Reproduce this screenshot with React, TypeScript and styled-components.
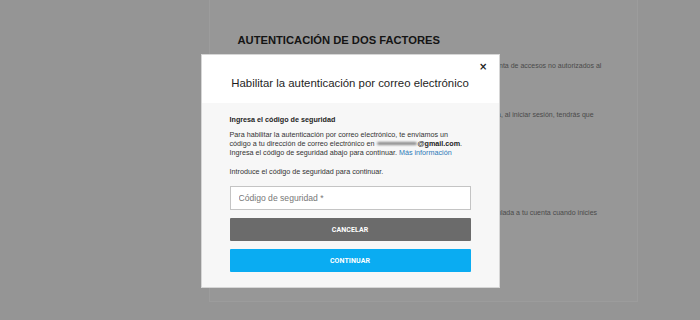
import React from 'react';
import styled, { createGlobalStyle } from 'styled-components';

const GlobalStyle = createGlobalStyle`
  html, body {
    margin: 0;
    padding: 0;
    background: #959595;
    font-family: 'Liberation Sans', Arial, sans-serif;
  }
`;

const Page = styled.div`
  width: 100%;
  height: 320px;
  display: flex;
  justify-content: center;
  padding-left: 146px;
  box-sizing: border-box;
  overflow: hidden;
`;
const Panel = styled.div`
  width: 429px;
  height: 302px;
  background: #979797;
  border-left: 1px solid #9c9c9c;
  border-right: 1px solid #9c9c9c;
  border-bottom: 1px solid #9c9c9c;
  padding: 34px 0 0 28px;
  box-sizing: border-box;
`;
const SectionTitle = styled.h2`
  margin: 0 0 16px;
  font-size: 11.2px;
  font-weight: 700;
  color: #141414;
`;
const BgText = styled.p`
  margin: 0;
  font-size: 7px;
  line-height: 8.5px;
  color: #4a4a4a;
  white-space: nowrap;
`;
const BgBlock = styled.div<{ gap: number }>`
  margin-bottom: ${(p) => p.gap}px;
`;

const Overlay = styled.div`
  position: fixed;
  inset: 0;
  display: flex;
  justify-content: center;
  align-items: flex-start;
  padding-top: 54px;
`;
const Modal = styled.div`
  position: relative;
  width: 299px;
  height: 234px;
  background: #f7f7f7;
  border: 1px solid #d6d6d6;
  box-sizing: border-box;
  display: flex;
  flex-direction: column;
`;
const Header = styled.div`
  height: 48px;
  background: #ffffff;
  display: flex;
  align-items: center;
  justify-content: center;
  padding-top: 8px;
  box-sizing: border-box;
`;
const Title = styled.h3`
  margin: 0;
  font-size: 11.4px;
  font-weight: 400;
  color: #1e1e1e;
`;
const Close = styled.button`
  position: absolute;
  top: 7px;
  right: 11px;
  border: 0;
  background: none;
  padding: 0;
  font-size: 10px;
  line-height: 10px;
  font-weight: 700;
  color: #222;
  font-family: 'DejaVu Sans', sans-serif;
`;
const Body = styled.div`
  padding: 12px 28px 0;
  display: flex;
  flex-direction: column;
`;
const Label = styled.div`
  font-size: 7.2px;
  font-weight: 700;
  color: #1e1e1e;
  margin-bottom: 6px;
`;
const Para = styled.p`
  margin: 0 0 10px;
  font-size: 7.2px;
  line-height: 9px;
  color: #333;
`;
const Email = styled.span`
  font-weight: 700;
  color: #222;
`;
const Blur = styled.span`
  display: inline-block;
  width: 40px;
  height: 3px;
  margin: 0 1px 1px 2px;
  background: #8a8a8a;
  border-radius: 2px;
  filter: blur(1px);
  vertical-align: middle;
`;
const Link = styled.a`
  color: #2c79b8;
  text-decoration: none;
`;
const Input = styled.input`
  height: 24px;
  border: 1px solid #c4c4c4;
  background: #fff;
  padding: 0 8px;
  font-size: 8.6px;
  font-family: 'Liberation Sans', Arial, sans-serif;
  color: #333;
  box-sizing: border-box;
  outline: none;
  margin-bottom: 8px;
  &::placeholder {
    color: #777;
  }
`;
const Button = styled.button<{ primary?: boolean }>`
  height: 23px;
  border: 0;
  border-radius: 1px;
  background: ${(p) => (p.primary ? '#0aacf2' : '#6b6b6b')};
  color: #fff;
  font-size: 7px;
  font-weight: 700;
  font-family: 'Roboto', 'Liberation Sans', sans-serif;
  letter-spacing: 0.1px;
  margin-bottom: 8px;
`;

export default function App() {
  return (
    <>
      <GlobalStyle />
      <Page>
        <Panel>
          <SectionTitle>AUTENTICACIÓN DE DOS FACTORES</SectionTitle>
          <BgBlock gap={32}>
            <BgText>Añade una capa de seguridad adicional a tu cuenta de Epic Games y protege tu cuenta de accesos no autorizados al</BgText>
            <BgText>restringir el inicio de sesión a quienes tengan el código generado para cada sesión</BgText>
          </BgBlock>
          <BgBlock gap={89}>
            <BgText>Si habilitas la autenticación mediante una aplicación de autenticación externa segura, al iniciar sesión, tendrás que</BgText>
          </BgBlock>
          <BgBlock gap={0}>
            <BgText>Recibirás siempre un código de seguridad en la dirección de correo electrónico vinculada a tu cuenta cuando inicies</BgText>
          </BgBlock>
        </Panel>
      </Page>
      <Overlay>
        <Modal>
          <Close aria-label="Cerrar">×</Close>
          <Header>
            <Title>Habilitar la autenticación por correo electrónico</Title>
          </Header>
          <Body>
            <Label>Ingresa el código de seguridad</Label>
            <Para>
              Para habilitar la autenticación por correo electrónico, te enviamos un
              código a tu dirección de correo electrónico en
              <Blur />
              <Email>@gmail.com</Email>.
              Ingresa el código de seguridad abajo para continuar. <Link href="#">Más información</Link>
            </Para>
            <Para>Introduce el código de seguridad para continuar.</Para>
            <Input placeholder="Código de seguridad *" />
            <Button>CANCELAR</Button>
            <Button primary>CONTINUAR</Button>
          </Body>
        </Modal>
      </Overlay>
    </>
  );
}
